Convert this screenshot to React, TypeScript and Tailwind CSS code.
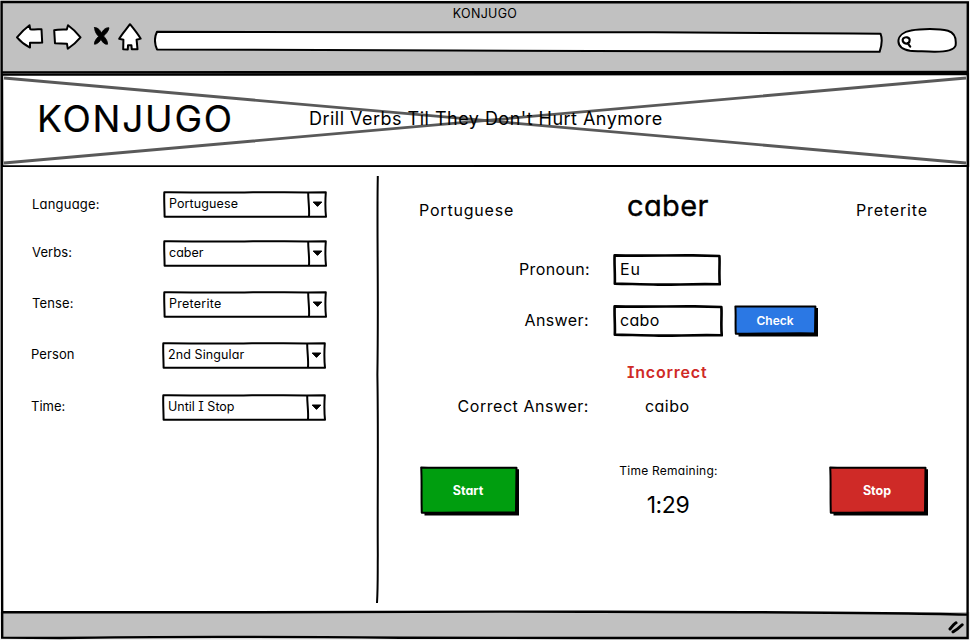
import type { ReactNode } from "react";

function BackIcon() {
  return (
    <svg width="28" height="26" viewBox="0 0 28 26" className="shrink-0" fill="#fff" stroke="#000" strokeWidth="2" strokeLinejoin="round">
      <path d="M1 13.3 C4.5 9 9 4.5 13.5 1.2 L14.2 5.2 C18 5.8 22 5.2 25.5 5.2 L26.2 18.6 C22 19 18 18.8 14 18.8 L14 23.6 C10 21.5 4.5 17.5 1 13.3 Z" />
    </svg>
  );
}

function ForwardIcon() {
  return (
    <svg width="29" height="27" viewBox="0 0 29 27" className="shrink-0" fill="#fff" stroke="#000" strokeWidth="2" strokeLinejoin="round">
      <path d="M1.2 6.2 C5 5.4 10 5.6 13.8 5.4 L15 1.2 C19 4 24 9 27.5 13.3 C24 17.5 19.5 21.5 14.8 24.8 L14 19.8 C10 19.6 6 19.4 2 19.2 Z" />
    </svg>
  );
}

function StopIcon() {
  return (
    <svg width="17" height="20" viewBox="0 0 17 20" className="shrink-0" stroke="#000" strokeLinecap="round" fill="#000">
      <path d="M1.6 1.6 C5 1.2 7.5 5 8.6 7 C9.8 4.5 12.5 1.2 16 1.8 C15.8 5 12.5 8.3 10.6 10 C12.5 12.5 14.5 14 14.6 18.2 C11.5 18.8 9 15.5 8 13.4 C6.5 15.5 4.5 18.2 1.4 18.2 C1.2 15 3.8 12.3 5.6 10.3 C3.6 8.5 1.5 5.5 1.6 1.6 Z" strokeWidth=".8" />
    </svg>
  );
}

function HomeIcon() {
  return (
    <svg width="24" height="28" viewBox="0 0 24 28" className="shrink-0" fill="#fff" stroke="#000" strokeWidth="2" strokeLinejoin="round" strokeLinecap="round">
      <path d="M12 1.2 C15.5 5.5 19.5 10.5 22.6 15.6 L18.6 16.8 L19.5 26.2 L13.8 26.2 L13.4 22.2 L10 22.2 L9.8 26.4 L5.2 26.2 L5.4 16.8 L1.2 15.8 C4 11 8.5 6 12 1.2 Z" />
    </svg>
  );
}

function AddressBar() {
  return (
    <svg width="730" height="23" viewBox="0 0 730 23" className="shrink-0" fill="#fff" stroke="#000" strokeWidth="2" strokeLinejoin="round">
      <path d="M3 1.8 C150 2 350 2.3 500 2.3 C600 3 660 3 726.5 3.7 C728.6 9 727.6 16 725.6 21.8 C560 21.8 420 21.5 300 20.6 C200 20.3 100 19.8 3 19.4 C.2 13 .4 7 3 1.8 Z" />
    </svg>
  );
}

function SearchBox() {
  return (
    <svg width="60" height="25" viewBox="0 0 60 25" className="shrink-0" fill="#fff" stroke="#000" strokeWidth="2" strokeLinejoin="round" strokeLinecap="round">
      <path d="M14 2.6 C24 .6 42 .4 51 2.8 C58 5 59.5 10 58.6 17.5 C57 22.5 48 23.8 37 23.7 C28 23 20 23.6 13 22.8 C5 21.5 1.4 17.5 1.4 13 C1.6 7.5 7 3.8 14 2.6 Z" />
      <path d="M6.2 10.5 C8.2 8.4 12.4 9 12.7 12 C12.8 15.3 9.6 16.2 7.4 15 C5.6 13.8 5.2 12 6.2 10.5 Z M10.6 15.2 L13.2 18.6" strokeWidth="2.2" />
    </svg>
  );
}

function ResizeGrip() {
  return (
    <svg width="17" height="14" viewBox="0 0 17 14" className="shrink-0" stroke="#000" strokeWidth="3" strokeLinecap="round" fill="none">
      <path d="M2 9 C4 6.5 6 4 8 2.8 M5 11.8 C8.5 10 11.5 7.5 14.2 4.8" />
    </svg>
  );
}

function Select({ value, spacing = "" }: { value: string; spacing?: string }) {
  return (
    <div className="relative flex h-[27px] w-[164px] shrink-0 items-center pb-[1px] pl-[6px]">
      <svg width="164" height="27" viewBox="0 0 164 27" className="absolute inset-0" fill="none" stroke="#000" strokeWidth="2" strokeLinejoin="round">
        <path d="M1.3 1.3 C40 1.6 60 1.8 90 1.2 C120 1.2 140 1.6 162.8 1.3 C162.2 10 162.2 18 163 25.8 C110 25.8 50 26 1.6 25.8 C1.6 18 .9 9 1.3 1.3 Z" />
        <path d="M145.2 2 C145.2 10 146.6 18 146 25" />
        <path d="M150.2 11 L158.8 11 L154.5 15.4 Z" fill="#000" strokeWidth="1" />
      </svg>
      <span className={`relative text-[12.5px] leading-4 ${spacing}`}>{value}</span>
    </div>
  );
}

function Field({ label, value, labelSpacing, spacing, labelPad = "pb-[3px]", className = "" }: { label: string; value: string; labelSpacing?: string; spacing?: string; labelPad?: string; className?: string }) {
  return (
    <div className={`flex h-[27px] items-center ${className}`}>
      <span className={`w-[131px] shrink-0 text-[13px] leading-4 ${labelPad} ${labelSpacing ?? ""}`}>{label}</span>
      <Select value={value} spacing={spacing} />
    </div>
  );
}

function TextBox({ wide, children }: { wide?: boolean; children: ReactNode }) {
  return (
    <div className={`relative flex h-8 shrink-0 items-center pb-[2px] pl-[7px] ${wide ? "w-[110px]" : "w-[108px]"}`}>
      <svg viewBox="0 0 108 32" preserveAspectRatio="none" className="absolute inset-0 h-full w-full" fill="none" stroke="#000" strokeWidth="2.6" strokeLinejoin="round">
        <path d="M1.6 1.4 C30 2 60 1.2 80 1.4 L106.4 2 C107 10 105.8 20 106.8 30.3 C80 29.6 60 31 45 30.6 C30 30 15 30 1.8 29.6 C2.2 20 1.2 10 1.6 1.4 Z" />
      </svg>
      <span className="relative text-[16px] leading-5">{children}</span>
    </div>
  );
}

function BigButton({ fill, children }: { fill: string; children: ReactNode }) {
  return (
    <button className="relative flex h-[50px] w-[100px] shrink-0 items-center justify-center pr-[4px] pb-[1px]">
      <svg width="100" height="50" viewBox="0 0 100 50" className="absolute inset-0" strokeLinejoin="round">
        <path d="M4.5 4 L99 3.2 L99 49.5 L4.5 49.5 Z" fill="#000" />
        <path d="M1.2 1.4 C30 2.2 60 1.4 96.5 1.8 L96 46.5 C60 46 30 47 1.8 46.8 C1.2 30 2 15 1.2 1.4 Z" fill={fill} stroke="#000" strokeWidth="2" />
      </svg>
      <span className="relative text-[12.5px] leading-4 font-bold text-white">{children}</span>
    </button>
  );
}

export default function App() {
  return (
    <div className="relative flex h-[640px] w-[970px] flex-col overflow-hidden bg-white font-['Inter',sans-serif] text-black [font-feature-settings:'cv11','cv08']">
      <header className="flex h-[73px] shrink-0 flex-col bg-[#c1c1c1]">
        <div className="flex h-[22px] justify-center pt-[6px]">
          <span className="text-[12.5px] leading-4 tracking-[0.3px]">KONJUGO</span>
        </div>
        <div className="flex items-start pl-[16px]">
          <div className="pt-[2px]"><BackIcon /></div>
          <div className="pt-[2px] pl-[9px]"><ForwardIcon /></div>
          <div className="pt-[4px] pl-[11px]"><StopIcon /></div>
          <div className="pt-[1px] pl-[8px]"><HomeIcon /></div>
          <div className="pt-[8px] pl-[12px]"><AddressBar /></div>
          <div className="pt-[6px] pl-[13px]"><SearchBox /></div>
        </div>
      </header>

      <section className="relative flex h-[94px] shrink-0 items-center pl-[37px]">
        <h1 className="w-[272px] pb-[2px] text-[37px] leading-10 tracking-[1.8px] [-webkit-text-stroke:0.2px_#000]">KONJUGO</h1>
        <p className="pb-[3px] text-[18px] leading-6 tracking-[0.48px]">Drill Verbs Til They Don't Hurt Anymore</p>
        <svg width="970" height="94" viewBox="0 0 970 94" className="absolute inset-0" fill="none">
          <path d="M4 5 L966 90 M4 90 L966 5" stroke="#000" strokeOpacity=".65" strokeWidth="2.8" />
          <path d="M2 1.6 L968.2 1 L968.4 93.2 L2.2 93.4 Z" stroke="#000" strokeWidth="2.4" />
        </svg>
      </section>

      <main className="flex flex-1">
        <div className="flex w-[372px] shrink-0 flex-col pt-[24px] pl-[32px]">
          <Field label="Language:" value="Portuguese" labelSpacing="tracking-[0.2px]" spacing="tracking-[0.1px]" labelPad="pb-[2px]" />
          <Field label="Verbs:" value="caber" labelSpacing="tracking-[0.1px]" className="mt-[22px]" />
          <Field label="Tense:" value="Preterite" labelSpacing="tracking-[0.15px]" spacing="tracking-[0.25px]" className="mt-[24px]" />
          <Field label="Person" value="2nd Singular" labelSpacing="tracking-[0.1px]" spacing="tracking-[0.1px]" className="mt-[24px] -ml-[1px]" />
          <Field label="Time:" value="Until I Stop" className="mt-[25px] -ml-[1px]" />
        </div>

        <svg width="10" height="430" viewBox="0 0 10 430" className="mt-[8px] shrink-0" fill="none" stroke="#000" strokeWidth="2">
          <path d="M5.8 1 C4.8 50 6.6 120 5.4 200 C6.4 260 5.4 330 5.8 380 C5.6 400 6 410 5 428" />
        </svg>

        <div className="flex w-[574px] flex-col pt-[19px] pl-[37px]">
          <div className="flex h-[40px] items-baseline">
            <span className="w-[208px] text-[16px] tracking-[0.8px]">Portuguese</span>
            <span className="w-[229px] text-[29px] leading-10 tracking-[0.4px] [-webkit-text-stroke:0.35px_#000]">caber</span>
            <span className="text-[16px] tracking-[0.85px]">Preterite</span>
          </div>

          <div className="mt-[28px] flex h-8 items-center">
            <span className="w-[171px] pb-[2px] text-right text-[16px] leading-5 tracking-[0.35px]">Pronoun:</span>
            <div className="ml-[23px]"><TextBox><span className="tracking-[0.8px]">Eu</span></TextBox></div>
          </div>

          <div className="mt-[19px] flex h-8 items-center">
            <span className="w-[170px] pb-[2px] text-right text-[16px] leading-5 tracking-[0.4px]">Answer:</span>
            <div className="ml-[24px]"><TextBox wide><span className="tracking-[0.3px]">cabo</span></TextBox></div>
            <button className="relative ml-[11px] flex h-8 w-[85px] items-center justify-center pr-[3px] pb-[1px]">
              <svg width="85" height="32" viewBox="0 0 85 32" className="absolute inset-0" strokeLinejoin="round">
                <path d="M4.5 3 L84 3 L84 31.5 L4.5 31.5 Z" fill="#000" />
                <path d="M1.4 1.4 C25 2 55 1.2 81.4 1.6 L81 28.4 C55 28 25 28.8 1.8 28.8 C1.2 20 2 10 1.4 1.4 Z" fill="#2b78e4" stroke="#000" strokeWidth="2" />
              </svg>
              <span className="relative text-[12px] leading-4 font-semibold text-white">Check</span>
            </button>
          </div>

          <div className="mt-[24px] flex h-[22px] items-center pl-[208px]">
            <span className="text-[16px] leading-5 font-semibold tracking-[0.8px] text-[#cf2a27]">Incorrect</span>
          </div>

          <div className="mt-[12px] flex h-[22px] items-center">
            <span className="w-[170px] text-right text-[16px] leading-5 tracking-[0.55px] whitespace-nowrap">Correct Answer:</span>
            <span className="ml-[56px] text-[16px] leading-5 tracking-[0.45px]">caibo</span>
          </div>

          <div className="mt-[49px] flex items-start pl-[1px]">
            <BigButton fill="#009e0f">Start</BigButton>
            <div className="ml-[77px] flex w-[142px] flex-col items-center">
              <span className="-mt-[3px] pl-[1px] text-[12px] leading-4 tracking-[0.25px] whitespace-nowrap">Time Remaining:</span>
              <span className="mt-[12px] text-[23px] leading-7 tracking-[-0.4px]">1:29</span>
            </div>
            <div className="ml-[90px]"><BigButton fill="#cf2a27">Stop</BigButton></div>
          </div>
        </div>
      </main>

      <footer className="flex h-[28px] shrink-0 items-center justify-end bg-[#c1c1c1] pt-[1px] pr-[5px]">
        <ResizeGrip />
      </footer>

      {/* Hand-drawn outline of the browser window */}
      <svg width="970" height="640" viewBox="0 0 970 640" className="pointer-events-none absolute inset-0" fill="none" stroke="#000" strokeWidth="2.4">
        <path d="M0 0 H970 V1 H0 Z M0 0 H1.2 V640 H0 Z M0 638.6 H970 V640 H0 Z M968.8 0 H970 V640 H968.8 Z" fill="#fff" stroke="none" opacity=".75" />
        <path d="M1.6 2 L967.8 2.4 C968.4 200 967 400 967.6 638 C700 637.6 600 638.4 400 637.8 C250 636.4 120 637 60 638 L2.2 637.6 C1.4 400 2 300 1.6 2 Z" />
        <path d="M2 72.4 L968 72" />
        <path d="M2 612.2 C200 613 300 611.6 500 611.6 C700 612 850 611.6 967 614.6" />
      </svg>
    </div>
  );
}
